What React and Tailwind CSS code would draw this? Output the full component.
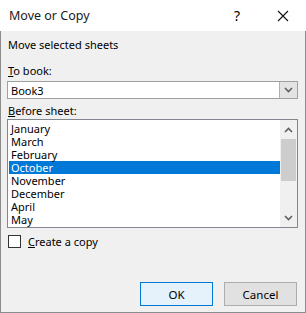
import React from 'react';

const sheets = ['January', 'March', 'February', 'October', 'November', 'December', 'April', 'May'];

function Chevron({ up }) {
  return (
    <svg width="9" height="6" viewBox="0 0 9 6" className="block">
      <path d={up ? 'M1 5 L4.5 1.5 L8 5' : 'M1 1 L4.5 4.5 L8 1'} fill="none" stroke="#606060" strokeWidth="1.6" />
    </svg>
  );
}

export default function App() {
  return (
    <div className="w-[306px] h-[313px] flex flex-col bg-[#f0f0f0] font-['Noto_Sans',sans-serif] text-[11px] leading-[13px] text-black">
      {/* Title bar */}
      <div className="h-[31px] shrink-0 bg-white flex items-center pl-[9px]">
        <span className="flex-1 text-[12.5px] text-[#1a1a1a]">Move or Copy</span>
        <span className="w-[16px] text-center text-[14px] mr-[32px]">?</span>
        <svg width="12" height="12" viewBox="0 0 12 12" className="mr-[17px]">
          <path d="M1 1 L11 11 M11 1 L1 11" stroke="#111" strokeWidth="1.1" />
        </svg>
      </div>

      {/* Body */}
      <div className="flex-1 flex flex-col border-l border-r border-b border-[#8c8c8c] pl-[6px] pr-[7px] pt-[7px]">
        <div className="pl-[1px]">Move selected sheets</div>

        <div className="mt-[13px] pl-[1px]"><span className="underline">T</span>o book:</div>
        <div className="mt-[4px] h-[18px] flex bg-white border border-[#a0a0a0]">
          <div className="flex-1 pl-[3px] flex items-center">Book3</div>
          <div className="w-[18px] bg-[#e3e3e3] border-l border-[#b0b0b0] flex items-center justify-center">
            <Chevron />
          </div>
        </div>

        <div className="mt-[5px] pl-[1px]"><span className="underline">B</span>efore sheet:</div>
        <div className="mt-[2px] h-[109px] flex bg-white border border-[#828790]">
          <div className="flex-1 pt-[2px] pl-[1px]">
            {sheets.map((s) => (
              <div
                key={s}
                className={
                  s === 'October'
                    ? 'h-[13px] pl-[2px] flex items-center bg-[#0078d7] text-white'
                    : 'h-[13px] pl-[2px] flex items-center'
                }
              >
                {s}
              </div>
            ))}
          </div>
          <div className="w-[17px] bg-[#f0f0f0] flex flex-col items-center">
            <div className="h-[19px] flex items-center justify-center"><Chevron up /></div>
            <div className="w-[15px] h-[42px] bg-[#cdcdcd]" />
            <div className="flex-1" />
            <div className="h-[19px] flex items-center justify-center"><Chevron /></div>
          </div>
        </div>

        <div className="mt-[7px] flex items-center">
          <div className="w-[13px] h-[13px] ml-[1px] border border-[#333] bg-white" />
          <span className="ml-[7px]"><span className="underline">C</span>reate a copy</span>
        </div>

        <div className="mt-auto mb-[6px] flex justify-end gap-[11px] pr-[1px]">
          <button className="w-[73px] h-[24px] bg-[#e5f1fb] border border-[#0078d7] text-[11.5px]">OK</button>
          <button className="w-[73px] h-[24px] bg-[#e1e1e1] border border-[#adadad] text-[11.5px]">Cancel</button>
        </div>
      </div>
    </div>
  );
}
